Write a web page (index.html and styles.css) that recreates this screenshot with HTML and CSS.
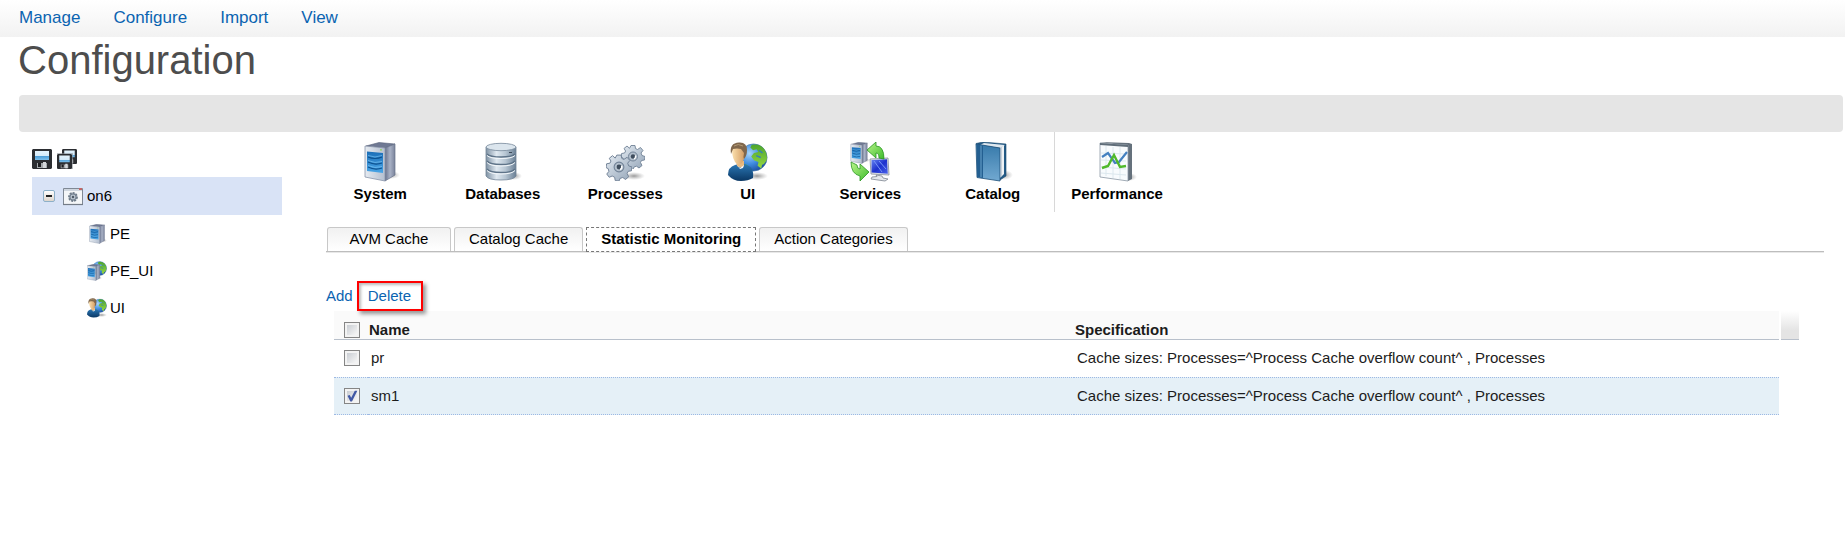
FILE: index.html
```
<!DOCTYPE html>
<html lang="en">
<head>
<meta charset="utf-8">
<title>Configuration</title>
<link rel="stylesheet" href="styles.css">
</head>
<body>
<svg class="sprite" aria-hidden="true">
  <defs>
    <linearGradient id="metal" x1="0" x2="1" y1="0" y2="0"><stop offset="0" stop-color="#e6ebf1"/><stop offset="1" stop-color="#b4bfd0"/></linearGradient>
    <linearGradient id="metalDark" x1="0" x2="1" y1="0" y2="0"><stop offset="0" stop-color="#67718c"/><stop offset=".5" stop-color="#a9b2c6"/><stop offset="1" stop-color="#7a839b"/></linearGradient>
    <linearGradient id="blue" x1="0" x2="0" y1="0" y2="1"><stop offset="0" stop-color="#1c6fb8"/><stop offset="1" stop-color="#49a5e6"/></linearGradient>
    <linearGradient id="disk" x1="0" x2="1" y1="0" y2="0"><stop offset="0" stop-color="#7f92a4"/><stop offset=".35" stop-color="#dfe8f0"/><stop offset=".65" stop-color="#b7c6d3"/><stop offset="1" stop-color="#6b8095"/></linearGradient>
    <linearGradient id="gearFill" x1="0" x2="1" y1="0" y2="1"><stop offset="0" stop-color="#e3eaf1"/><stop offset="1" stop-color="#94a5b8"/></linearGradient>
    <radialGradient id="ocean" cx=".35" cy=".35" r=".7"><stop offset="0" stop-color="#a9d6fb"/><stop offset=".55" stop-color="#3f8ce0"/><stop offset="1" stop-color="#1c4f9f"/></radialGradient>
    <linearGradient id="land" x1="0" x2="0" y1="0" y2="1"><stop offset="0" stop-color="#4da52c"/><stop offset="1" stop-color="#96d842"/></linearGradient>
    <linearGradient id="shirt" x1="0" x2="0" y1="0" y2="1"><stop offset="0" stop-color="#2b77b4"/><stop offset="1" stop-color="#0a3764"/></linearGradient>
    <linearGradient id="skin" x1="0" x2="1" y1="0" y2="0"><stop offset="0" stop-color="#fbe0ae"/><stop offset="1" stop-color="#d29a60"/></linearGradient>
    <linearGradient id="arrow" x1="0" x2="1" y1="0" y2="1"><stop offset="0" stop-color="#baf58b"/><stop offset="1" stop-color="#3ebc2c"/></linearGradient>
    <linearGradient id="screen" x1="0" x2="1" y1="0" y2="1"><stop offset="0" stop-color="#6685f2"/><stop offset=".5" stop-color="#1d31cd"/><stop offset="1" stop-color="#4a62ea"/></linearGradient>
    <linearGradient id="book" x1="0" x2="0" y1="0" y2="1"><stop offset="0" stop-color="#3679aa"/><stop offset="1" stop-color="#72a9d1"/></linearGradient>
    <linearGradient id="label" x1="0" x2="0" y1="0" y2="1"><stop offset="0" stop-color="#e4f3fc"/><stop offset=".6" stop-color="#d3eafa"/><stop offset=".61" stop-color="#4f9fd8"/><stop offset="1" stop-color="#7dc0ec"/></linearGradient>
    <radialGradient id="shade"><stop offset="0" stop-color="#555" stop-opacity=".6"/><stop offset="1" stop-color="#888" stop-opacity="0"/></radialGradient>
  </defs>
  <symbol id="server" viewBox="0 0 40 40">
    <ellipse cx="31" cy="33" rx="9" ry="4" fill="url(#shade)"/>
    <path d="M6 4 19 .5 35 2 25 6Z" fill="#6f7993" stroke="#586179" stroke-width=".6"/>
    <path d="M25 6 35 2v31L25 39Z" fill="url(#metalDark)" stroke="#69728a" stroke-width=".7"/>
    <path d="M5 4 25 6v33L5 35Z" fill="url(#metal)" stroke="#8994a9" stroke-width=".8"/>
    <path d="M7 9.500 23 11v20L7 29Z" fill="url(#blue)"/>
    <path d="M8 15q7 3 14 0M8 20q7 3.500 14 1M8 25q7 3.500 14 1" fill="none" stroke="#0c518f" stroke-width="1.200"/>
    <path d="M8 13.500q7 3 14 0M8 18.500q7 3.500 14 1M8 23.500q7 3.500 14 1" fill="none" stroke="#7fc8f7" stroke-width=".6"/>
    <circle cx="21" cy="7.800" r=".9" fill="#8ccf55"/>
  </symbol>
  <symbol id="globe" viewBox="0 0 32 32">
    <circle cx="16" cy="16" r="15" fill="url(#ocean)" stroke="#4576a4" stroke-width=".7"/>
    <path d="M14 2q9-2 14 5 4 6 2.500 12-3 5-5 5l-1 4-4-3 1-4-5-2-3-4 3-4 5-1-2-3-4 1-3-3Z" fill="url(#land)"/>
    <path d="m19 14 5 2M22 8l4 3" stroke="#357ebd" stroke-width="1.500"/>
    <path d="M5 23q6 1 9 7-6-1-9-7Z" fill="url(#land)"/>
  </symbol>
  <symbol id="user-globe" viewBox="0 0 40 40">
    <ellipse cx="29" cy="34" rx="11" ry="4" fill="url(#shade)"/>
    <use href="#globe" x="11" y="1" width="29" height="29"/>
    <path d="M0 33q0-8 7-10l4-1h5l5 2q5 2 4 12-5 3-12 3Q5 39 0 33Z" fill="url(#shirt)"/>
    <path d="M8 19h8v5q-3 3-7 0Z" fill="#e8b97f"/>
    <path d="m9 23 3 3 4-3-1 3-3 1Z" fill="#f3f6fa"/>
    <path d="M4 7q0-5 7-5 6 0 6 7 0 9-4 13h-4q-5-4-5-15Z" fill="url(#skin)"/>
    <path d="M3 12Q1 1 11 .5 19 0 19 8q0 6-3 9-1-2 0-6l-3-4q-4-1-8 0Z" fill="#80674c"/>
    <path d="M6 4q4-3 9 0" fill="none" stroke="#b39a75"/>
  </symbol>
  <symbol id="gear" viewBox="0 0 24 24">
    <path d="m10 1 4 0 .5 3 2 1 3-2 2.500 3-2 2.500 1 2.500 3 1-.5 3.500-3 .5-1 2 1.500 3-3 2.500-2.500-1.800-2.500.8-1 2.500-3.500-.5-.5-3-2.300-1.200L3 21.500.700 18.500l2-2.500-.7-2.500-2-1 .6-3.500 3-.5 1-2L3 4l3-2.500L8.500 3.800Z" fill="url(#gearFill)" stroke="#718296" stroke-width=".9"/>
    <circle cx="12" cy="12" r="4.500" fill="#b4c0cd" stroke="#728397"/>
    <circle cx="12" cy="12" r="2.200" fill="#3f4d5d"/>
    <path d="M13 14.500q2-1 1.500-3.500" fill="none" stroke="#fff" stroke-width="1.300"/>
  </symbol>
  <symbol id="floppy" viewBox="0 0 20 20">
    <path d="M1 0h18l1 1v18l-1 1H1l-1-1V1Z" fill="#2b2d31"/>
    <path d="M3 2h14v9H3Z" fill="url(#label)"/>
    <path d="M5 14h10v5H5Z" fill="#a4a8ac"/>
    <path d="M6 14h3v4H6Z" fill="#1c1d20"/>
    <path d="M11 13h3v6h-3Z" fill="#d4d7da"/>
  </symbol>
</svg>

<nav class="menu" aria-label="Main">
  <a href="#">Manage</a>
  <a href="#">Configure</a>
  <a href="#">Import</a>
  <a href="#">View</a>
</nav>
<h1 class="title">Configuration</h1>
<div class="band"></div>

<div class="layout">
  <aside class="side">
    <div class="save">
      <button type="button" aria-label="Save"><svg width="20" height="20"><use href="#floppy"/></svg></button>
      <button type="button" aria-label="Save all"><svg width="20" height="20" viewBox="0 0 20 20"><use href="#floppy" x="5" y="0" width="15" height="15"/><path d="M0 4.500h15.500V20" fill="none" stroke="#8b9096" stroke-width=".6"/><use href="#floppy" x="0" y="5" width="15" height="15"/></svg></button>
    </div>
    <ul class="tree">
      <li class="node root">
        <button type="button" class="toggle" aria-label="Collapse on6"></button>
        <svg width="20" height="20" viewBox="0 0 20 20"><path d="M.5 2.500h19v16H.5Z" fill="#f4f6f8" stroke="#7f8894"/><path d="M1 3h18v2H1Z" fill="#cfd6df"/><path d="M16 2h3v2h-3Z" fill="#c46666"/><path d="M0 18.500h20" stroke="#747c87" stroke-width="1.200"/><circle cx="10" cy="11" r="4" fill="#aab5c1" stroke="#6d7a88" stroke-width="1.800" stroke-dasharray="2 1"/><circle cx="10" cy="11" r="3" fill="#b9c3ce" stroke="#778493"/><circle cx="10" cy="11" r="1.200" fill="#4c5967"/></svg>
        <span>on6</span>
      </li>
      <li class="node leaf"><svg width="20" height="20"><use href="#server"/></svg><span>PE</span></li>
      <li class="node leaf"><svg width="20" height="20" viewBox="0 0 20 20"><use href="#globe" x="5" y="0" width="15" height="15"/><use href="#server" x="-2" y="3" width="17" height="17"/></svg><span>PE_UI</span></li>
      <li class="node leaf"><svg width="20" height="20"><use href="#user-globe"/></svg><span>UI</span></li>
    </ul>
  </aside>

  <main class="main">
    <div class="tools">
      <div class="group">
        <button type="button"><svg width="40" height="40"><use href="#server"/></svg>System</button>
        <button type="button"><svg width="40" height="40" viewBox="2 0 40 40"><ellipse cx="33" cy="34" rx="8" ry="4" fill="url(#shade)"/><path d="M5 5v29q2 4 15 4t15-4V5Z" fill="url(#disk)" stroke="#718395" stroke-width=".8"/><ellipse cx="20" cy="5" rx="15" ry="3.700" fill="#dbe5ed" stroke="#77899a" stroke-width=".8"/><path d="M6 12q3 3 14 3t14-3M6 19q3 3.500 14 3.500T34 19M6 27q3 3.500 14 3.500T34 27" fill="none" stroke="#5e7388" stroke-width="1.300"/><path d="M6 13.500q3 3 14 3t14-3M6 20.500q3 3.500 14 3.500t14-3.500M6 28.500q3 3.500 14 3.500t14-3.500" fill="none" stroke="#f4f8fb"/><path d="M28 10.500h3" stroke="#3b4957"/></svg>Databases</button>
        <button type="button"><svg width="40" height="40" viewBox="0 0 40 40"><ellipse cx="29" cy="34" rx="11" ry="4" fill="url(#shade)"/><use href="#gear" x="16" y="2" width="24" height="25"/><use href="#gear" x="1" y="11" width="26" height="28"/></svg>Processes</button>
        <button type="button"><svg width="40" height="40"><use href="#user-globe"/></svg>UI</button>
        <button type="button"><svg width="40" height="40" viewBox="0 0 40 40"><use href="#server" x="-3" y="0" width="24" height="22"/><path d="m20 17 18-1 1 17-18-1Z" fill="#dfe3e8" stroke="#868e9a" stroke-width=".8"/><path d="m21.500 18 15.500-.7.800 14.500L21.500 30.500Z" fill="url(#screen)"/><path d="m24 19 8 11M29 19l7 8" stroke="#7897f8"/><path d="m26 33 6 1 1 2 5 1-3 2-14-2 1-2 5-.5Z" fill="#e5e8ec" stroke="#7d8591" stroke-width=".8"/><path d="m17 8 9-8v4q8 0 8 13l-5-1q0-5-3-5v5Z" fill="url(#arrow)" stroke="#2a9622" stroke-width=".8"/><path d="m1 20 6 3q0 4 3 4v-5l9 8-9 9v-5q-9-2-9-14Z" fill="url(#arrow)" stroke="#2a9622" stroke-width=".8"/></svg>Services</button>
        <button type="button"><svg width="40" height="40" viewBox="2 0 40 40"><ellipse cx="33" cy="33" rx="9" ry="5" fill="url(#shade)"/><path d="M5 1.500 12 0l23 2v32l-6 4Z" fill="#245b86" stroke="#1d4b70" stroke-width=".6"/><path d="m9 3 20 3 5-3-21-2Z" fill="#dfe8ef"/><path d="m29 6 4-3v29l-4 4Z" fill="#eef2f5"/><path d="M30.500 5v29" stroke="#b7c2cc" stroke-width=".7"/><path d="m5 2 24 4v33L6 35.500Z" fill="url(#book)" stroke="#1d4f79" stroke-width=".8"/><path d="m6 2.500 6 1v32.500l-6-1Z" fill="#235f91"/><path d="M10 3.500V35" stroke="#6aa4cc"/></svg>Catalog</button>
      </div>
      <div class="group single">
        <button type="button"><svg width="40" height="40" viewBox="0 0 40 40"><ellipse cx="32" cy="35" rx="8" ry="4" fill="url(#shade)"/><path d="m3 0 29 1 3 1v35l-4 2-1-35Z" fill="#65717c"/><path d="M3 1 31 3v36L3 35Z" fill="#f8fbfd" stroke="#8b98a4" stroke-width=".8"/><path d="m3 1 28 2v2L3 3Z" fill="#5f6d79"/><path d="M9 4v30M16 5v31M23 5v32M4 11l25 1M4 18l25 1M4 25l25 2M4 31l25 2" stroke="#dce8ee" fill="none"/><path d="m5 15 6-4 7 10 4-1 8-10" fill="none" stroke="#4380c0" stroke-width="2.200"/><path d="m5 26 6-2 6-11 6 12 6-1" fill="none" stroke="#50b92b" stroke-width="2.400"/></svg>Performance</button>
      </div>
    </div>

    <div class="tabs" role="tablist">
      <button type="button" role="tab" aria-selected="false">AVM Cache</button>
      <button type="button" role="tab" aria-selected="false">Catalog Cache</button>
      <button type="button" role="tab" aria-selected="true">Statistic Monitoring</button>
      <button type="button" role="tab" aria-selected="false">Action Categories</button>
    </div>

    <div class="actions">
      <a href="#">Add</a>
      <a href="#" class="marked">Delete</a>
    </div>

    <div class="grid">
      <table class="table">
        <thead>
          <tr><th class="check"><input type="checkbox" aria-label="Select all"></th><th class="name">Name</th><th>Specification</th></tr>
        </thead>
        <tbody>
          <tr><td class="check"><input type="checkbox" aria-label="Select pr"></td><td>pr</td><td>Cache sizes: Processes=^Process Cache overflow count^ , Processes</td></tr>
          <tr class="selected"><td class="check"><input type="checkbox" aria-label="Select sm1" checked></td><td>sm1</td><td>Cache sizes: Processes=^Process Cache overflow count^ , Processes</td></tr>
        </tbody>
      </table>
      <div class="cap"></div>
    </div>
  </main>
</div>
</body>
</html>
```
FILE: styles.css
```
* { box-sizing: border-box; }

body {
  margin: 0;
  background: #fff;
  color: #000;
  font: 15px/18px "Liberation Sans", Arial, sans-serif;
}

button {
  margin: 0;
  padding: 0;
  border: 0;
  background: none;
  color: inherit;
  font: inherit;
}

a { color: #0b64b1; text-decoration: none; }
svg { display: block; flex: none; }
.sprite { position: absolute; width: 0; height: 0; }

.menu {
  display: flex;
  align-items: center;
  gap: 33px;
  height: 37px;
  padding: 0 19px 1px;
  background: linear-gradient(#fff, #f2f2f2);
  font-size: 17px;
}

.title {
  margin: 0;
  padding: 0 18px 12px;
  color: #4d4d4d;
  font-size: 40px;
  font-weight: normal;
  line-height: 46px;
}

.band {
  height: 37px;
  margin: 0 2px 0 19px;
  border-radius: 4px;
  background: #e5e5e5;
}

.layout { display: flex; align-items: flex-start; }

.side { flex: none; width: 282px; padding: 17px 0 0 32px; }
.save { display: flex; gap: 5px; margin-bottom: 8px; }
.tree { margin: 0; padding: 0; list-style: none; }
.node { display: flex; align-items: center; gap: 4px; height: 37px; }
.root { height: 38px; padding-left: 11px; background: #d9e3f6; }
.leaf { gap: 3px; padding-left: 55px; }

.toggle {
  width: 12px;
  height: 12px;
  margin-right: 4px;
  border: 1px solid #8db0c8;
  border-radius: 2px;
  background: linear-gradient(#222, #222) center / 6px 2px no-repeat, linear-gradient(#fff, #ddd5cc);
}

.main { flex: 1; min-width: 0; padding: 0 21px 0 44px; }

.tools { display: flex; height: 80px; margin-left: -7px; }
.group { display: grid; grid-template-columns: repeat(6, 1fr); width: 735px; }
.single { grid-template-columns: 1fr; width: 125px; border-left: 1px solid #d8d8d8; }
.tools button {
  display: flex;
  flex-direction: column;
  align-items: center;
  gap: 3px;
  padding-top: 10px;
  font-weight: bold;
}

.tabs {
  display: flex;
  gap: 3px;
  margin-top: 15px;
  padding-left: 1px;
  border-bottom: 1px solid #bdbdbd;
  box-shadow: 0 1px #e8e8e8;
}
.tabs button {
  height: 24px;
  padding: 0 14px 2px;
  border: 1px solid #c8c8c8;
  border-bottom: 0;
  border-radius: 3px 3px 0 0;
  background: linear-gradient(#f1f1f1, #fff);
}
.tabs button:first-child { min-width: 124px; }
.tabs [aria-selected="true"] {
  height: 25px;
  margin-bottom: -1px;
  border: 1px dashed #777;
  border-radius: 0;
  background: #fff;
  font-weight: bold;
}

.actions { display: flex; align-items: center; gap: 4px; margin-top: 29px; }
.marked {
  position: relative;
  padding: 4px 10px 4px 9px;
  border: 2px solid #f00;
  box-shadow: 3px 3px 4px #0006, inset 2px 2px 3px #0004;
}

.grid { display: flex; align-items: flex-start; gap: 2px; padding: 0 25px 0 8px; }
.table {
  flex: 1;
  border-collapse: separate;
  border-spacing: 0;
  table-layout: fixed;
  color: #1c1c1c;
  text-align: left;
}
.table th {
  height: 29px;
  padding: 9px 0 0 1px;
  border-bottom: 1px solid #b8c0cb;
  background: #fafafa;
}
.table td { height: 37px; padding: 0 0 2px 3px; }
.table .selected td {
  height: 38px;
  padding-bottom: 0;
  border: 1px dotted #9db9e4;
  border-width: 1px 0;
  background: #e5f0f7;
}
.table .check { width: 34px; padding-left: 10px; }
.table .name { width: 706px; }

input[type="checkbox"] {
  display: block;
  appearance: none;
  width: 16px;
  height: 16px;
  margin: 0;
  border: 1px solid #858585;
  background: linear-gradient(135deg, #c0c5cc, #f4f4f4 80%);
  box-shadow: inset 0 0 0 2px #f3f3f3;
}
input[type="checkbox"]:checked::before {
  content: "";
  display: block;
  width: 14px;
  height: 14px;
  background: #4259a5;
  clip-path: polygon(18% 48%, 34% 42%, 44% 62%, 70% 12%, 88% 12%, 50% 90%, 38% 90%);
}

.cap {
  width: 18px;
  height: 29px;
  border-bottom: 1px solid #b8c0cb;
  background: linear-gradient(#fff, #e4e4e4 70%);
}
```
